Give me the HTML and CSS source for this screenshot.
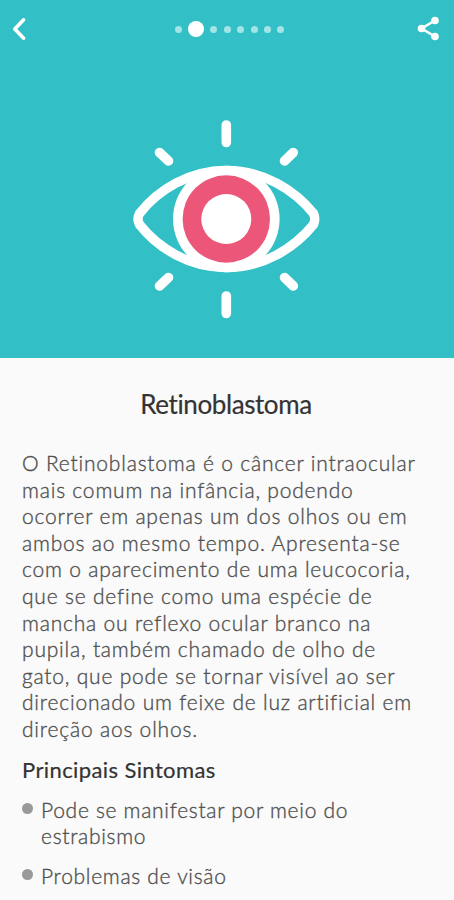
FILE: index.html
```html
<!DOCTYPE html>
<html lang="pt-BR">
<head>
    <meta charset="UTF-8">
    <meta name="viewport" content="width=device-width, initial-scale=1.0">
    <title>Retinoblastoma</title>
    <link rel="stylesheet" href="styles.css">
</head>
<body>
    <header class="hero">
        <nav class="topbar">
            <svg class="back" width="20" height="30" viewBox="0 0 20 30">
                <path d="M13.6 5.8 L4.8 15 L13.6 24.2"/>
            </svg>
            <div class="dots">
                <span class="dot"></span>
                <span class="dot active"></span>
                <span class="dot"></span>
                <span class="dot"></span>
                <span class="dot"></span>
                <span class="dot"></span>
                <span class="dot"></span>
                <span class="dot"></span>
            </div>
            <svg class="share" width="24" height="26" viewBox="0 0 24 26">
                <path d="M18 4.5 L4.5 12.5 L18 20.5"/>
                <circle cx="18" cy="4.5" r="3.8"/>
                <circle cx="4.5" cy="12.5" r="3.8"/>
                <circle cx="18" cy="20.5" r="3.8"/>
            </svg>
        </nav>
        <svg class="eye" width="212" height="220" viewBox="0 0 212 220">
            <path class="outline" d="M19.5 103.5 C38 80 69 60.5 106.3 60.5 C143.5 60.5 174.5 80 193.5 103.5 Q196 109 193.5 114.5 C174.5 138 143.5 157.5 106.3 157.5 C69 157.5 38 138 19.5 114.5 Q16.5 109 19.5 103.5 Z"/>
            <circle class="white" cx="106.3" cy="109" r="53.3"/>
            <circle class="iris" cx="106.3" cy="109" r="43.7"/>
            <circle class="white" cx="106.3" cy="109" r="25"/>
            <path class="rays" d="M106.3 15 V32.5 M106.3 186 V203.5 M39.5 42.5 L48.5 51 M173.3 42.5 L164.5 51 M39.5 176 L48.5 167.5 M173.3 176 L164.5 167.5"/>
        </svg>
    </header>
    <main class="content">
        <h1>Retinoblastoma</h1>
        <p>
            O Retinoblastoma é o câncer intraocular<br>
            mais comum na infância, podendo<br>
            ocorrer em apenas um dos olhos ou em<br>
            ambos ao mesmo tempo. Apresenta-se<br>
            com o aparecimento de uma leucocoria,<br>
            que se define como uma espécie de<br>
            mancha ou reflexo ocular branco na<br>
            pupila, também chamado de olho de<br>
            gato, que pode se tornar visível ao ser<br>
            direcionado um feixe de luz artificial em<br>
            direção aos olhos.
        </p>
        <h2>Principais Sintomas</h2>
        <ul>
            <li>Pode se manifestar por meio do<br>estrabismo</li>
            <li>Problemas de visão</li>
        </ul>
    </main>
</body>
</html>
```

FILE: styles.css
```css
* {
    box-sizing: border-box;
}

body {
    margin: 0;
    height: 900px;
    overflow: hidden;
    background: #fafafa;
    color: #505050;
    font-family: "Futura", "Lato", sans-serif;
    font-variant-ligatures: none;
}

.hero {
    height: 358px;
    background: #32c0c6;
    display: flex;
    flex-direction: column;
}

.topbar {
    height: 58px;
    padding: 0 13px 0 10px;
    display: flex;
    align-items: center;
    justify-content: space-between;
}

.back path {
    fill: none;
    stroke: #fff;
    stroke-width: 3.6;
    stroke-linecap: round;
    stroke-linejoin: round;
}

.dots {
    display: flex;
    align-items: center;
    gap: 6.4px;
    margin-left: 12px;
}

.dot {
    width: 7px;
    height: 7px;
    border-radius: 50%;
    background: #a3e4e7;
}

.dot.active {
    width: 16px;
    height: 16px;
    background: #fff;
}

.share path {
    fill: none;
    stroke: #fff;
    stroke-width: 2.6;
}

.share circle {
    fill: #fff;
}

.eye {
    margin: 52px 0 0 120px;
}

.outline {
    fill: none;
    stroke: #fff;
    stroke-width: 9.4;
    stroke-linejoin: round;
}

.rays {
    fill: none;
    stroke: #fff;
    stroke-width: 9.6;
    stroke-linecap: round;
}

.white {
    fill: #fff;
}

.iris {
    fill: #ec5779;
}

.content {
    padding: 30px 22px 0;
}

h1 {
    margin: 0 2px 0 0;
    font-size: 26px;
    line-height: 32px;
    font-weight: 400;
    letter-spacing: -0.4px;
    text-align: center;
    color: #333;
    -webkit-text-stroke: 0.2px #333;
}

p {
    margin: 30px 0 0;
    font-size: 21px;
    line-height: 26.6px;
    font-weight: 300;
    letter-spacing: 0.8px;
    white-space: nowrap;
    -webkit-text-stroke: 0.35px #505050;
}

h2 {
    margin: 13px 0 0;
    font-size: 22px;
    line-height: 27px;
    font-weight: 400;
    letter-spacing: 0.4px;
    color: #333;
    -webkit-text-stroke: 0.2px #333;
}

ul {
    margin: 14px 0 0;
    padding: 0;
    list-style: none;
    font-size: 21px;
    line-height: 26.6px;
    font-weight: 300;
    letter-spacing: 0.7px;
    -webkit-text-stroke: 0.35px #505050;
}

li {
    display: grid;
    grid-template-columns: 11px 1fr;
    column-gap: 8px;
    margin-bottom: 13px;
    white-space: nowrap;
}

li::before {
    content: "";
    width: 11px;
    height: 11px;
    margin-top: 6px;
    border-radius: 50%;
    background: #999;
}
```
